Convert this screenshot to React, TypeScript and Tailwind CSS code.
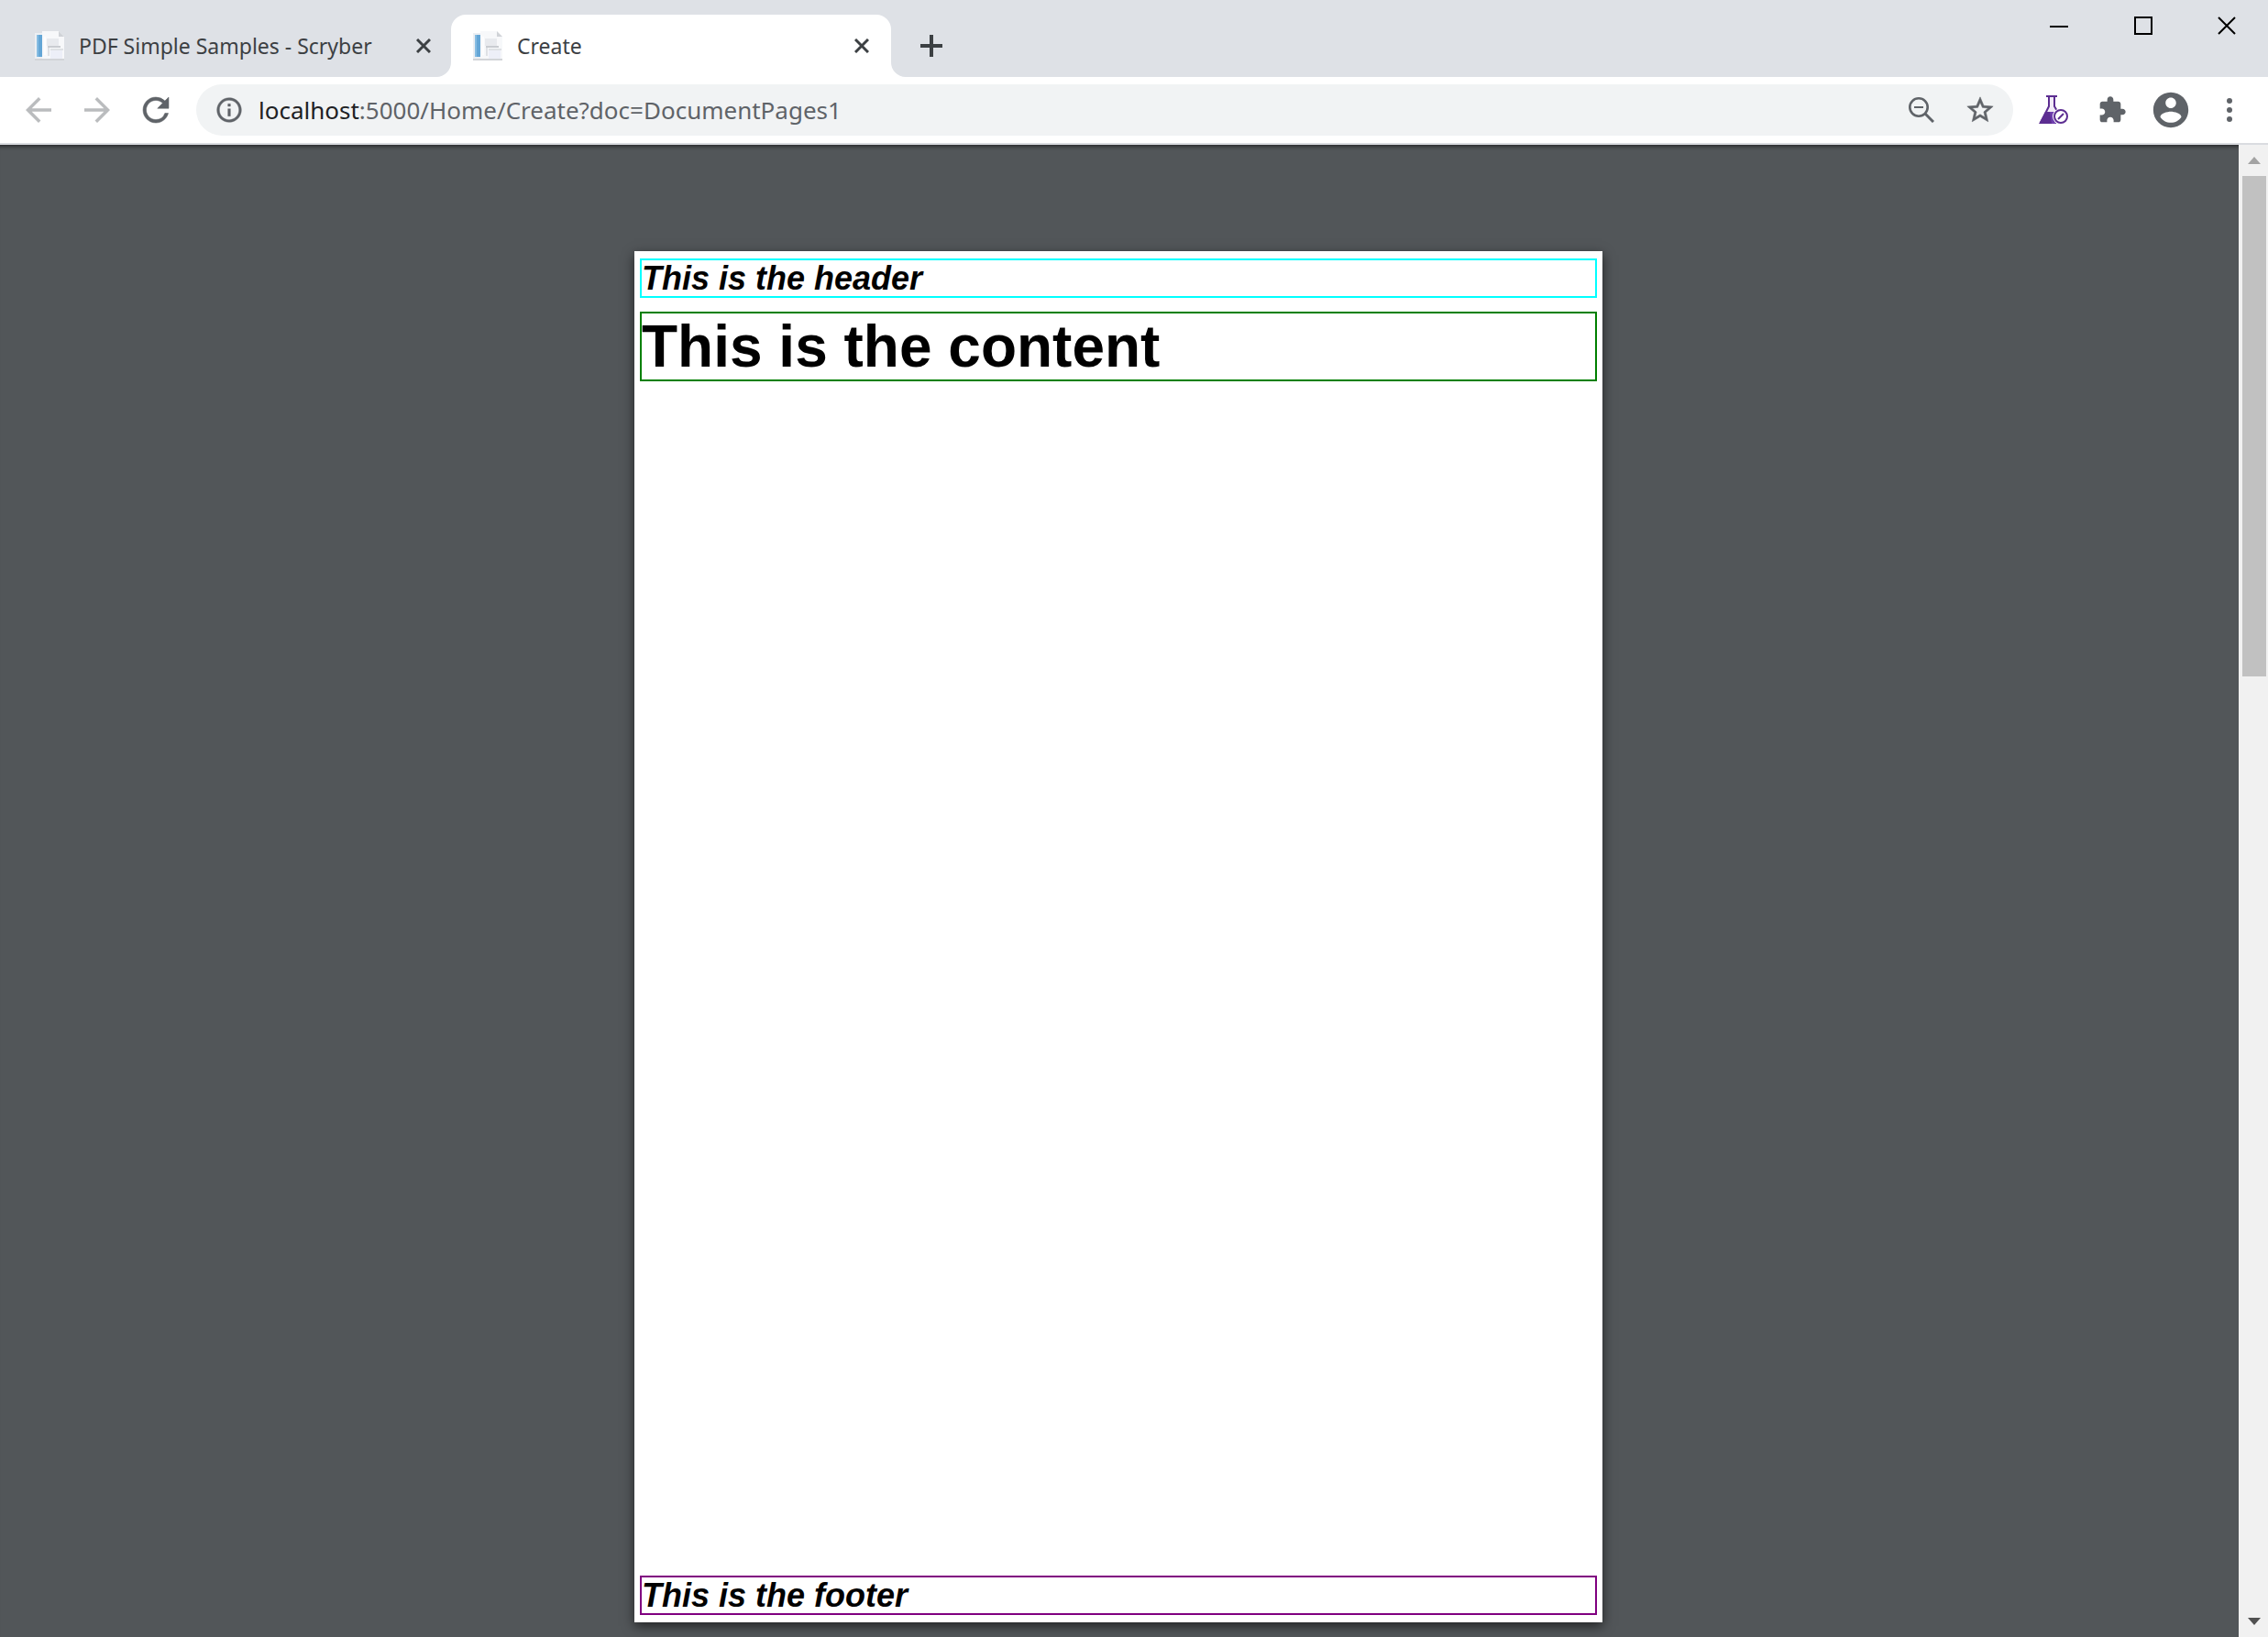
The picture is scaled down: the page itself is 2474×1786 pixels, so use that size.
import React from "react";

type IconProps = { d: string; className: string };

function Icon({ d, className }: IconProps) {
  return (
    <svg viewBox="0 0 24 24" fill="currentColor" className={className} aria-hidden="true">
      <path d={d} />
    </svg>
  );
}

const paths = {
  back: "M20 11H7.83l5.59-5.59L12 4l-8 8 8 8 1.41-1.41L7.83 13H20v-2z",
  forward: "M12 4l-1.41 1.41L16.17 11H4v2h12.17l-5.58 5.59L12 20l8-8z",
  reload:
    "M17.65 6.35A7.958 7.958 0 0012 4c-4.42 0-7.99 3.58-7.99 8s3.57 8 7.99 8c3.73 0 6.84-2.55 7.73-6h-2.08A5.99 5.99 0 0112 18c-3.31 0-6-2.69-6-6s2.69-6 6-6c1.66 0 3.14.69 4.22 1.78L13 11h7V4l-2.35 2.35z",
  info: "M11 7h2v2h-2zm0 4h2v6h-2zm1-9C6.48 2 2 6.48 2 12s4.48 10 10 10 10-4.48 10-10S17.52 2 12 2zm0 18c-4.41 0-8-3.59-8-8s3.59-8 8-8 8 3.59 8 8-3.59 8-8 8z",
  star: "M22 9.24l-7.19-.62L12 2 9.19 8.63 2 9.24l5.46 4.73L5.82 21 12 17.27 18.18 21l-1.63-7.03L22 9.24zM12 15.4l-3.76 2.27 1-4.28-3.32-2.88 4.38-.38L12 6.1l1.71 4.04 4.38.38-3.32 2.88 1 4.28L12 15.4z",
  puzzle:
    "M20.5 11H19V7c0-1.1-.9-2-2-2h-4V3.5C13 2.12 11.88 1 10.5 1S8 2.12 8 3.5V5H4c-1.1 0-1.99.9-1.99 2v3.8H3.5c1.49 0 2.7 1.21 2.7 2.7s-1.21 2.7-2.7 2.7H2V20c0 1.1.9 2 2 2h3.8v-1.5c0-1.49 1.21-2.7 2.7-2.7 1.49 0 2.7 1.21 2.7 2.7V22H17c1.1 0 2-.9 2-2v-4h1.5c1.38 0 2.5-1.12 2.5-2.5S21.88 11 20.5 11z",
  account:
    "M12 2C6.48 2 2 6.48 2 12s4.48 10 10 10 10-4.48 10-10S17.52 2 12 2zm0 3c1.66 0 3 1.34 3 3s-1.34 3-3 3-3-1.34-3-3 1.34-3 3-3zm0 14.2c-2.5 0-4.71-1.28-6-3.22.03-1.99 4-3.08 6-3.08 1.99 0 5.97 1.09 6 3.08-1.29 1.94-3.5 3.22-6 3.22z",
};

function Favicon() {
  return (
    <svg viewBox="0 0 32 32" className="size-8 shrink-0" aria-hidden="true">
      <path d="M0 2h9v28H0z" fill="#eceff3" />
      <path d="M2 4h6v24H2z" fill="#64a6d6" />
      <path d="M2 4h2v24H2z" fill="#86bce2" />
      <path d="M0 30h32v2H0z" fill="#d2d4d8" />
      <path d="M8 0h18l6 6v24H8z" fill="#f7f8fa" />
      <path d="M26 0l6 6h-6z" fill="#d0d3d7" />
      <path d="M10 6h2v20h-2z" fill="#fdfdfe" />
      <path d="M13 8h13v8H13z" fill="#e8eaee" />
      <path d="M14 16h14v2H14z" fill="#c9ccd1" />
      <path d="M14 18h2v9h-2z" fill="#dfe1e5" />
      <path d="M17 20h13v10H17z" fill="#edeff8" />
      <path d="M17 19h14v2H17z" fill="#dfe1e5" />
    </svg>
  );
}

function Cross({ className }: { className: string }) {
  return (
    <svg viewBox="0 0 16 16" className={className} aria-hidden="true">
      <path d="M1 1l14 14M15 1L1 15" stroke="currentColor" strokeWidth="3" />
    </svg>
  );
}

function Flask() {
  return (
    <svg viewBox="0 0 32 32" className="size-8" fill="none" aria-hidden="true">
      <path d="M10 2h8v10l4 8H5l5-8z" fill="#f1eaf7" />
      <path d="M8 1h12M11 2v10L2 30M17 2v10l3 5" stroke="#5c2d91" strokeWidth="2" />
      <path d="M7 18h6l6 13H0z" fill="#5c2d91" />
      <path d="M12 18h6l1 13h-5z" fill="#6f3fae" />
      <circle cx="24" cy="23" r="9" fill="#fff" />
      <circle cx="24" cy="23" r="7" stroke="#5c2d91" strokeWidth="2" />
      <path d="M21 26l6-6" stroke="#5c2d91" strokeWidth="2" />
    </svg>
  );
}

function ZoomOut() {
  return (
    <svg viewBox="0 0 28 28" className="size-7" fill="none" stroke="currentColor" aria-hidden="true">
      <circle cx="11" cy="11" r="9.7" strokeWidth="2.6" />
      <path d="M6 11h10" strokeWidth="2" />
      <path d="M18 18l9 9" strokeWidth="3" />
    </svg>
  );
}

function ToolButton({ label, children }: { label: string; children: React.ReactNode }) {
  return (
    <button aria-label={label} className="flex h-14 w-16 shrink-0 items-center justify-center">
      {children}
    </button>
  );
}

function TabCurve({ className }: { className: string }) {
  return (
    <svg viewBox="0 0 16 16" className={className} aria-hidden="true">
      <path d="M16 0v16H0A16 16 0 0016 0z" fill="#fff" />
    </svg>
  );
}

function TabStrip() {
  return (
    <header className="flex h-[84px] bg-[#dee1e6] text-[#3c4043]">
      <div role="tablist" className="flex pt-4 pl-4">
        <div role="tab" aria-selected="false" className="flex w-[476px] items-center px-[22px]">
          <Favicon />
          <span className="ml-4 grow text-[23px] whitespace-nowrap">PDF Simple Samples - Scryber</span>
          <button aria-label="Close tab">
            <Cross className="size-4" />
          </button>
        </div>
        <div
          role="tab"
          aria-selected="true"
          className="relative flex w-[480px] items-center rounded-t-2xl bg-white px-6"
        >
          <TabCurve className="absolute bottom-0 -left-4 size-4" />
          <TabCurve className="absolute -right-4 bottom-0 size-4 -scale-x-100" />
          <Favicon />
          <span className="ml-4 grow text-[23px] whitespace-nowrap">Create</span>
          <button aria-label="Close tab">
            <Cross className="size-4" />
          </button>
        </div>
        <button aria-label="New tab" className="ml-8 flex w-6 items-center justify-center">
          <svg viewBox="0 0 24 24" className="size-6" aria-hidden="true">
            <path d="M12 0v24M0 12h24" stroke="#3c4043" strokeWidth="4" />
          </svg>
        </button>
      </div>
      <div className="ml-auto flex h-14 text-black">
        <button aria-label="Minimize" className="flex w-[92px] items-center justify-center">
          <svg viewBox="0 0 20 20" className="size-5" aria-hidden="true">
            <path d="M0 11h20" stroke="currentColor" strokeWidth="2" />
          </svg>
        </button>
        <button aria-label="Maximize" className="flex w-[92px] items-center justify-center">
          <svg viewBox="0 0 20 20" className="size-5" aria-hidden="true">
            <path d="M1 1h18v18H1z" fill="none" stroke="currentColor" strokeWidth="2" />
          </svg>
        </button>
        <button aria-label="Close" className="flex w-[90px] items-center justify-center">
          <svg viewBox="0 0 20 20" className="size-5" aria-hidden="true">
            <path d="M1 1l18 18M19 1L1 19" stroke="currentColor" strokeWidth="2" />
          </svg>
        </button>
      </div>
    </header>
  );
}

function Toolbar() {
  return (
    <nav className="flex h-[74px] items-center border-b-2 border-[#dadce0] bg-white px-2.5 text-[#5f6368]">
      <div className="flex text-[#babcbe]">
        <ToolButton label="Back">
          <Icon d={paths.back} className="size-[42px]" />
        </ToolButton>
        <ToolButton label="Forward">
          <Icon d={paths.forward} className="size-[42px]" />
        </ToolButton>
      </div>
      <ToolButton label="Reload">
        <Icon d={paths.reload} className="size-[42px] stroke-current stroke-[0.3]" />
      </ToolButton>
      <div className="mx-3 flex h-14 grow items-center rounded-full bg-[#f1f3f4] pr-1 pl-5">
        <Icon d={paths.info} className="size-8 stroke-current stroke-[0.3]" />
        <a href="#document" className="ml-4 grow text-[26px] whitespace-nowrap text-[#5f6368]">
          <span className="text-[#202124]">localhost</span>:5000/Home/Create?doc=DocumentPages1
        </a>
        <ToolButton label="Zoom">
          <ZoomOut />
        </ToolButton>
        <ToolButton label="Bookmark this page">
          <Icon d={paths.star} className="size-[34px] stroke-current stroke-[0.4]" />
        </ToolButton>
      </div>
      <ToolButton label="Experiments">
        <Flask />
      </ToolButton>
      <ToolButton label="Extensions">
        <Icon d={paths.puzzle} className="size-8" />
      </ToolButton>
      <ToolButton label="Profile">
        <Icon d={paths.account} className="size-[46px]" />
      </ToolButton>
      <ToolButton label="Menu">
        <svg viewBox="0 0 8 28" className="h-7 w-2" fill="currentColor" aria-hidden="true">
          <circle cx="4" cy="4" r="3" />
          <circle cx="4" cy="14" r="3" />
          <circle cx="4" cy="24" r="3" />
        </svg>
      </ToolButton>
    </nav>
  );
}

function Scrollbar() {
  return (
    <aside className="flex w-8 shrink-0 flex-col bg-[#f1f1f1] pr-0.5 pl-1">
      <button aria-label="Scroll up" className="flex h-[34px] items-center justify-center">
        <svg viewBox="0 0 14 8" className="h-2 w-3.5" aria-hidden="true">
          <path d="M7 0l7 8H0z" fill="#a3a3a3" />
        </svg>
      </button>
      <div className="flex grow flex-col">
        <div className="h-[35%] bg-[#c1c1c1]" />
      </div>
      <button aria-label="Scroll down" className="flex h-[34px] items-center justify-center">
        <svg viewBox="0 0 14 8" className="h-2 w-3.5" aria-hidden="true">
          <path d="M7 8l7-8H0z" fill="#505050" />
        </svg>
      </button>
    </aside>
  );
}

function DocumentPage() {
  return (
    <article
      id="document"
      className="flex min-h-[1496px] w-[1056px] flex-col bg-white px-1.5 py-2 font-['Liberation_Sans',sans-serif] font-bold text-black shadow-[0_4px_12px_rgba(0,0,0,0.6)]"
    >
      <div className="border-2 border-[#00ffff] text-4xl leading-[39px] italic">This is the header</div>
      <h1 className="mt-[15px] border-2 border-[#008000] text-[64px] leading-[72px]">This is the content</h1>
      <div className="mt-auto border-2 border-[#800080] text-4xl leading-[39px] italic">This is the footer</div>
    </article>
  );
}

export default function App() {
  return (
    <div className="flex h-screen flex-col overflow-hidden font-['Noto_Sans',sans-serif]">
      <TabStrip />
      <Toolbar />
      <div className="flex min-h-0 grow">
        <main className="flex grow items-start justify-center overflow-hidden bg-[#525659] pt-[116px] pr-0.5 shadow-[inset_0_6px_4px_-4px_rgba(0,0,0,0.5)]">
          <DocumentPage />
        </main>
        <Scrollbar />
      </div>
    </div>
  );
}
